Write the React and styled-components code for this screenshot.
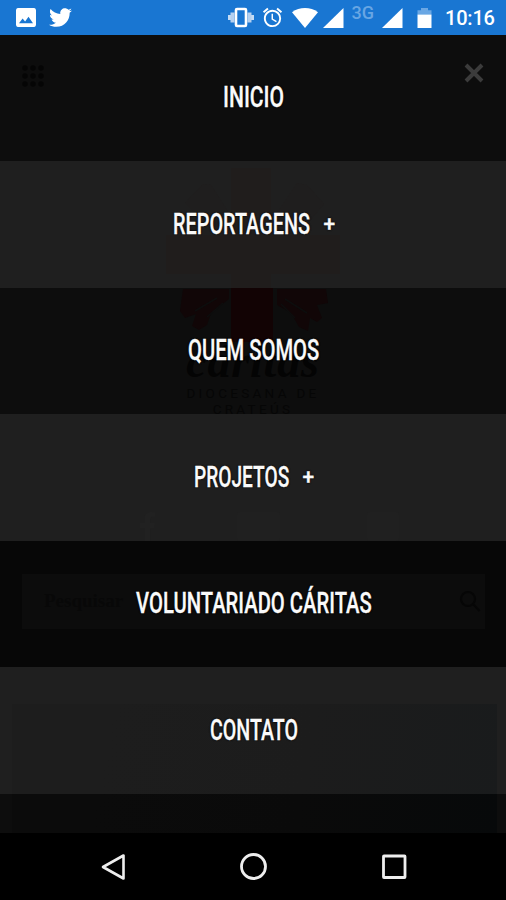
import React, { useLayoutEffect, useRef, useState } from "react";
import { FaFacebookF, FaTwitter } from "react-icons/fa";
import { MdAlarm } from "react-icons/md";
import styled, { createGlobalStyle } from "styled-components";

const GlobalStyle = createGlobalStyle`
  * {
    box-sizing: border-box;
  }

  body {
    margin: 0;
    background: #000;
    font-family: Roboto, "Liberation Sans", sans-serif;
  }
`;

const Screen = styled.div`
  display: flex;
  flex-direction: column;
  width: 506px;
  height: 900px;
  overflow: hidden;
  background: #000;
`;

const StatusBar = styled.header`
  display: flex;
  align-items: flex-start;
  height: 34.5px;
  flex: none;
  padding-left: 16px;
  background: #1976d2;
  color: #fff;

  & svg {
    display: block;
    flex: none;
  }
`;

const StatusSlot = styled.div`
  margin-left: ${(p) => p.$gap || 0}px;
  padding-top: ${(p) => p.$top}px;
`;

const Network = styled.div`
  width: 24px;
  margin-left: 8px;
  padding-top: 4px;
  color: #68a6e4;
  font-size: 18px;
  font-weight: 500;
  line-height: 18px;
`;

const Clock = styled.div`
  margin-left: 13px;
  padding-top: 6px;
  font-size: 20px;
  font-weight: 500;
  line-height: 24px;
  letter-spacing: -0.2px;
`;

const Content = styled.main`
  position: relative;
  height: 798.5px;
  flex: none;
  overflow: hidden;
  background: #0d0d0d;
`;

/* dimmed page behind the menu */
const Page = styled.div`
  display: flex;
  flex-direction: column;
  height: 100%;
`;

const PageHeader = styled.div`
  height: 126px;
  padding: 30px 0 0 22px;
`;

const Brand = styled.div`
  display: flex;
  flex-direction: column;
  align-items: center;
  height: 351px;
  color: #040404;

  & svg {
    display: block;
    flex: none;
  }
`;

const BrandName = styled.div`
  margin-top: -3px;
  font: italic bold 46px/46px "Liberation Serif", serif;
  letter-spacing: 0.8px;
`;

const BrandPlace = styled.div`
  color: #060606;
  font-size: 13.5px;
  line-height: 16px;
  letter-spacing: 3.3px;
  text-align: center;
`;

const Social = styled.div`
  display: flex;
  gap: 87px;
  height: 29px;
  padding-left: 133px;
  color: #101010;

  & svg {
    margin-right: -12px;
  }
`;

const SocialBox = styled.div`
  width: ${(p) => p.$width}px;
  height: 29px;
  border-radius: 3px;
  background: #0f0f0f;
`;

const SearchArea = styled.div`
  height: 126px;
  padding: 33px 21px 0 22px;
  background: #070707;
`;

const SearchBox = styled.div`
  display: flex;
  align-items: center;
  justify-content: space-between;
  height: 55px;
  padding: 0 4px 0 22px;
  background: #0c0c0c;
  color: #080808;
  font: bold 19px "Liberation Serif", serif;
`;

const Article = styled.div`
  flex: 1;
  margin: 37px 9px 0 12px;
  background: linear-gradient(100deg, #0b0b0b 20%, #0a0a0a 60%, #07090a);
`;

const Menu = styled.nav`
  position: absolute;
  inset: 0;
  display: grid;
  grid-template-rows: repeat(6, 126.5px);
`;

const MenuItem = styled.a`
  display: flex;
  align-items: center;
  justify-content: center;
  gap: 14px;
  padding: 0 0 1px 1px;
  color: #fafafa;
  font-size: 29px;
  font-weight: 500;
  line-height: 34px;
  text-decoration: none;
  text-shadow: 0 0 2px #000, 0 0 2px #000;

  &:nth-child(even) {
    background: rgba(255, 255, 255, 0.075);
  }
`;

const LabelBox = styled.span`
  display: block;
  width: ${(p) => p.$width}px;
  white-space: nowrap;
`;

const LabelText = styled.span`
  display: inline-block;
  transform-origin: left center;
  -webkit-text-stroke: 0.3px #fafafa;
`;

const Plus = styled.span`
  width: 11px;
  font-size: 21px;
  font-weight: 500;
  line-height: 34px;
  -webkit-text-stroke: 0.3px #fafafa;
`;

const Close = styled.button`
  position: absolute;
  top: 28px;
  right: 22px;
  width: 20px;
  height: 20px;
  padding: 0;
  border: 0;
  background: none;

  & svg {
    display: block;
  }
`;

const NavBar = styled.footer`
  display: flex;
  align-items: center;
  justify-content: space-between;
  flex: 1;
  padding: 0 98px 0 100px;

  & svg {
    display: block;
  }
`;

const items = [
  { label: "INICIO", width: 61 },
  { label: "REPORTAGENS", width: 137, more: true },
  { label: "QUEM SOMOS", width: 131 },
  { label: "PROJETOS", width: 95, more: true },
  { label: "VOLUNTARIADO CÁRITAS", width: 236 },
  { label: "CONTATO", width: 88 },
];

// Narrows the lettering so that it fills the given width
const Condensed = ({ width, children }) => {
  const ref = useRef(null);
  const [scale, setScale] = useState(1);

  useLayoutEffect(() => {
    setScale(width / ref.current.offsetWidth);
  }, [width]);

  return (
    <LabelBox $width={width}>
      <LabelText ref={ref} style={{ transform: `scaleX(${scale})` }}>
        {children}
      </LabelText>
    </LabelBox>
  );
};

const Signal = () => (
  <svg width="21" height="20" viewBox="0 0 21 20">
    <path d="M20.5 0v20H0z" fill="#fff" />
  </svg>
);

const Status = () => (
  <StatusBar>
    <StatusSlot $top={8}>
      <svg width="20" height="19" viewBox="0 0 20 19">
        <path
          fill="#fff"
          fillRule="evenodd"
          d="M2.5 0h15A2.3 2.3 0 0 1 20 2.3v14.4a2.3 2.3 0 0 1-2.5 2.3h-15A2.3 2.3 0 0 1 0 16.7V2.3A2.3 2.3 0 0 1 2.5 0zM3 15.2h14l-4.5-6.4-3.4 4.6-2.5-2.8z"
        />
      </svg>
    </StatusSlot>
    <StatusSlot $gap={12.5} $top={6}>
      <FaTwitter size={23} />
    </StatusSlot>
    <StatusSlot $gap={156} $top={7}>
      <svg width="26" height="21" viewBox="0 0 26 21">
        <path d="M0 8h3v5H0zM23 8h3v5h-3z" fill="#c5dcf5" />
        <path d="M2.5 5.5h4v10h-4zM19.5 5.5h4v10h-4z" fill="#b4d0f0" />
        <rect
          x="8"
          y="2"
          width="10"
          height="17"
          rx="1"
          fill="none"
          stroke="#fff"
          strokeWidth="2.6"
        />
      </svg>
    </StatusSlot>
    <StatusSlot $gap={7.5} $top={6}>
      <MdAlarm size={23} />
    </StatusSlot>
    <StatusSlot $gap={7.5} $top={7.5}>
      <svg width="26" height="20" viewBox="0 0 26 20">
        <path d="M0 4.3C7.5-1.3 18.5-1.3 26 4.3L13 20z" fill="#fff" />
      </svg>
    </StatusSlot>
    <StatusSlot $gap={5} $top={8}>
      <Signal />
    </StatusSlot>
    <Network>3G</Network>
    <StatusSlot $gap={6} $top={8}>
      <Signal />
    </StatusSlot>
    <StatusSlot $gap={14.5} $top={8}>
      <svg width="15" height="20" viewBox="0 0 15 20">
        <path d="M4 0h7v2.2h3.5v4.3H.5V2.2H4z" fill="#6aa7e4" />
        <path d="M.5 6.5h14V20H.5z" fill="#fff" />
      </svg>
    </StatusSlot>
    <Clock>10:16</Clock>
  </StatusBar>
);

const Apps = () => (
  <svg width="22" height="23" viewBox="0 0 22 23" fill="#050505">
    {[3, 11, 19].map((y) =>
      [3, 11, 19].map((x) => <circle key={`${x}-${y}`} cx={x} cy={y} r="2.7" />)
    )}
  </svg>
);

const Logo = () => (
  <svg width="176" height="181" viewBox="0 0 176 181">
    <g fill="#0f0b0a">
      <path d="M66 7h40v67h69v39h-69v16H66v-16H1V74h65z" />
      <path
        opacity=".45"
        d="M20 42l18-19 8 1 18 28v17H47zM112 52l20-30 10 2 17 19-22 26h-25z"
      />
    </g>
    <path d="M66 127h42v54H66z" fill="#120304" />
    <g fill="#110607">
      <path d="M18 128h46v10L46 152l-4 12-8 5-7-4 4-12-11 4-5-7z" />
      <path d="M112 128h49l2 14-11 2 5 13-5 4-7-4-2 13-9-4-8-14-14-8z" />
    </g>
    <path
      d="M30 150l22-13M42 156l16-14M120 138l22 14M116 143l14 14"
      stroke="#0d0d0d"
      strokeWidth="1.5"
    />
  </svg>
);

const Backdrop = () => (
  <Page>
    <PageHeader>
      <Apps />
    </PageHeader>
    <Brand>
      <Logo />
      <BrandName>cáritas</BrandName>
      <BrandPlace>
        DIOCESANA DE
        <br />
        CRATEÚS
      </BrandPlace>
    </Brand>
    <Social>
      <FaFacebookF size={29} />
      <SocialBox $width={43} />
      <SocialBox $width={32} />
    </Social>
    <SearchArea>
      <SearchBox>
        Pesquisar
        <svg width="22" height="22" viewBox="0 0 22 22">
          <path
            d="M14.5 14.5l6 6.5M9 2a7 7 0 1 1 0 14A7 7 0 0 1 9 2z"
            fill="none"
            stroke="#060606"
            strokeWidth="2.2"
          />
        </svg>
      </SearchBox>
    </SearchArea>
    <Article />
  </Page>
);

const App = () => (
  <>
    <GlobalStyle />
    <Screen>
      <Status />
      <Content>
        <Backdrop />
        <Menu>
          {items.map(({ label, width, more }) => (
            <MenuItem key={label} href="#">
              <Condensed width={width}>{label}</Condensed>
              {more && <Plus>+</Plus>}
            </MenuItem>
          ))}
        </Menu>
        <Close aria-label="Fechar">
          <svg width="20" height="20" viewBox="0 0 20 20">
            <path
              d="M2 2l16 16M18 2L2 18"
              stroke="#3b3b3b"
              strokeWidth="4"
            />
          </svg>
        </Close>
      </Content>
      <NavBar>
        <svg width="28" height="28" viewBox="0 0 28 28">
          <path
            d="M23.5 2.5v23L3 14z"
            fill="none"
            stroke="#eee"
            strokeWidth="2.6"
            strokeLinejoin="round"
          />
        </svg>
        <svg width="28" height="28" viewBox="0 0 28 28">
          <circle
            cx="13.5"
            cy="13.5"
            r="12"
            fill="none"
            stroke="#eee"
            strokeWidth="2.8"
          />
        </svg>
        <svg width="28" height="28" viewBox="0 0 28 28">
          <rect
            x="3.5"
            y="3"
            width="21.5"
            height="21.5"
            rx="0.5"
            fill="none"
            stroke="#eee"
            strokeWidth="2.8"
          />
        </svg>
      </NavBar>
    </Screen>
  </>
);

export default App;
